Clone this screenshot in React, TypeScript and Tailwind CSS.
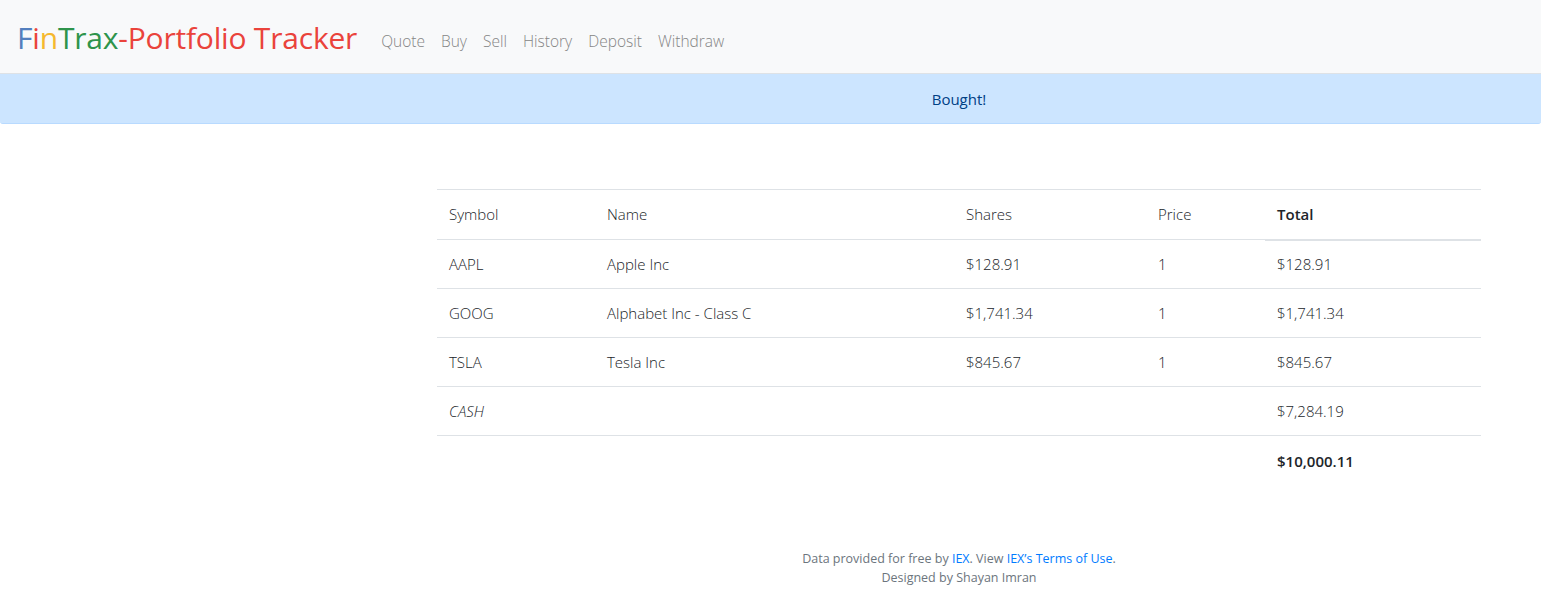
const rows = [
  { symbol: "AAPL", name: "Apple Inc", shares: "$128.91", price: "1", total: "$128.91" },
  { symbol: "GOOG", name: "Alphabet Inc - Class C", shares: "$1,741.34", price: "1", total: "$1,741.34" },
  { symbol: "TSLA", name: "Tesla Inc", shares: "$845.67", price: "1", total: "$845.67" },
];

const NAV = ["Quote", "Buy", "Sell", "History", "Deposit", "Withdraw"];

export default function App() {
  return (
    <div className="min-h-[602px] bg-white" style={{ fontFamily: "'Open Sans', 'Noto Sans', sans-serif" }}>
      <nav className="h-[74px] bg-[#f8f9fa] border-b border-[#dee2e6] flex items-center pl-[17px] pt-[2px]">
        <a className="text-[30px] leading-none tracking-[-0.2px] mr-[16px]">
          <span className="text-[#537fbe]">F</span>
          <span className="text-[#ea433b]">i</span>
          <span className="text-[#f5b82e]">n</span>
          <span className="text-[#2e944b]">Trax</span>
          <span className="text-[#ea433b]">-Portfolio Tracker</span>
        </a>
        <ul className="flex items-center pt-[8px]">
          {NAV.map((n) => (
            <li key={n} className="px-2 text-[15.5px] font-light text-[#858585]">{n}</li>
          ))}
        </ul>
      </nav>

      <div className="h-[50px] bg-[#cce5ff] border-b border-[#b8daff] rounded-b-[3px] flex items-center justify-center pl-[377px] pt-[2px]">
        <span className="text-[15px] text-[#004085]">Bought!</span>
      </div>

      <main className="pl-[377px]">
        <div className="mx-[60px] mt-[65px]">
          <table className="w-full text-[15px] font-light text-[#212529] border-collapse">
            <thead>
              <tr className="h-[50px] border-t border-[#dee2e6]">
                <th className="w-[158px] text-left font-light px-3 border-b border-[#dee2e6]">Symbol</th>
                <th className="w-[359px] text-left font-light px-3 border-b border-[#dee2e6]">Name</th>
                <th className="w-[192px] text-left font-light px-3 border-b border-[#dee2e6]">Shares</th>
                <th className="w-[119px] text-left font-light px-3 border-b border-[#dee2e6]">Price</th>
                <th className="text-left font-semibold px-3 border-b-2 border-[#dee2e6]">Total</th>
              </tr>
            </thead>
            <tbody>
              {rows.map((r) => (
                <tr key={r.symbol} className="h-[49px] border-b border-[#dee2e6]">
                  <td className="px-3">{r.symbol}</td>
                  <td className="px-3">{r.name}</td>
                  <td className="px-3">{r.shares}</td>
                  <td className="px-3">{r.price}</td>
                  <td className="px-3">{r.total}</td>
                </tr>
              ))}
              <tr className="h-[49px] border-b border-[#dee2e6]">
                <td className="px-3 italic" colSpan={4}>CASH</td>
                <td className="px-3">$7,284.19</td>
              </tr>
            </tbody>
            <tfoot>
              <tr className="h-[50px]">
                <td colSpan={4}></td>
                <td className="px-3 font-semibold">$10,000.11</td>
              </tr>
            </tfoot>
          </table>
        </div>

        <footer className="mt-[63px] text-center text-[12.5px] leading-[19px] text-[#6c757d]">
          <p>
            Data provided for free by <a className="text-[#007bff]">IEX</a>. View{" "}
            <a className="text-[#007bff]">IEX’s Terms of Use</a>.
          </p>
          <p>Designed by Shayan Imran</p>
        </footer>
      </main>
    </div>
  );
}
